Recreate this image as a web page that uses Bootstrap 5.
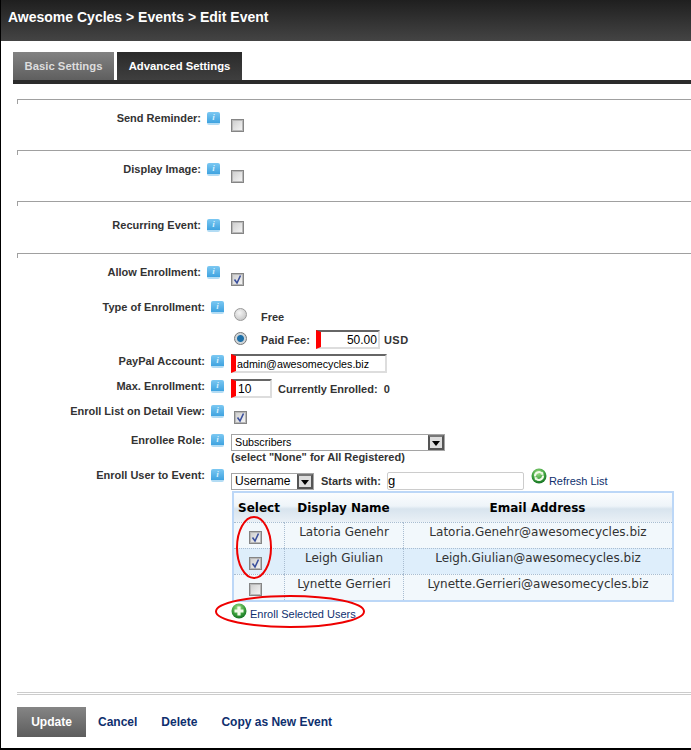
<!DOCTYPE html>
<html lang="en">
<head>
    <meta charset="UTF-8">
    <meta name="viewport" content="width=device-width, initial-scale=1.0">
    <title>Edit Event</title>
    <link href="https://cdn.jsdelivr.net/npm/bootstrap@5.3.0/dist/css/bootstrap.min.css" rel="stylesheet">
    <style>
        html, body { height: 750px; overflow: hidden; }
        body { background: #fff; color: #333; font-family: "Liberation Sans", Arial, sans-serif; font-size: 11px; line-height: 14px; }
        .page-frame { height: 750px; border-left: 1px solid #000; border-bottom: 2px solid #000; }
        .title-bar { height: 41px; padding: 9px 7px 0; background: linear-gradient(#1f1f1f, #444); color: #fff; font-size: 14px; font-weight: 700; line-height: 17px; }
        .tab-strip { margin: 11px 0 0 12px; height: 32px; border-bottom: 4px solid #2b2b2b; gap: 3px; }
        .tab-item { height: 28px; padding: 6px 0 0; font-size: 11.3px; font-weight: 700; line-height: 16px; color: #fff; text-decoration: none; text-align: center; white-space: nowrap; }
        .tab-off { width: 101px; background: linear-gradient(#828282, #5f5f5f); color: #ddd; }
        .tab-on { width: 125px; background: linear-gradient(#2a2a2a, #3f3f3f); }
        .form-area { margin-left: 16px; }
        .rule { border-top: 1px solid #a0a0a0; height: 5px; border-left: 1px solid #a0a0a0; }
        .rule-first { margin-top: 15px; }
        .form-row { display: flex; }
        .row-plain { height: 46px; padding-top: 7px; }
        .row-recur { height: 47px; padding-top: 12px; }
        .row-allow { height: 35px; padding-top: 7px; }
        .row-type { height: 61px; padding-top: 7px; }
        .row-input { height: 25px; }
        .row-list { height: 29px; }
        .row-role { height: 35px; }
        .row-enroll { height: 150px; }
        .field-label { width: 184px; flex: none; text-align: right; font-weight: 700; color: #333; }
        .help-tip { width: 13px; height: 13px; margin: 1px 0 0 6px; flex: none; border-radius: 2px; background: linear-gradient(#7cc8f2, #3fa3e0); border-bottom: 2px solid #b3dcf4; color: #d8f0fc; font: italic 700 9px/11px "Liberation Serif", serif; text-align: center; }
        .field-body { margin-left: 11px; flex: 1; min-width: 0; }
        /* from Type of Enrollment down the label column is 4px wider, the fields stay put */
        .row-wide .field-label { width: 188px; }
        .row-wide .field-body { margin-left: 7px; }
        .pad-check { padding-top: 8px; }
        .pad-recur { padding-top: 3px; }
        .pad-allow { padding-top: 8px; }
        .pad-list { padding-top: 7px; }
        .pad-type { padding-top: 9px; }
        .pad-role { padding-top: 1px; }
        .pad-enroll { margin-top: 4px; }
        .fake-check { display: inline-block; width: 13px; height: 13px; border: 1px solid #858585; box-shadow: inset 0 0 0 1px #b8b8b8; background: linear-gradient(135deg, #ccc, #f7f7f7); vertical-align: top; }
        .fake-check svg { display: block; width: 11px; height: 11px; }
        .shift-list { margin-left: 3px; }
        .fake-radio { display: inline-block; width: 13px; height: 13px; margin-left: 3px; border-radius: 50%; border: 1px solid #999; background: radial-gradient(circle at 40% 35%, #f5f5f5, #bbb); flex: none; }
        .fake-radio.radio-on { background: radial-gradient(circle, #1d6fa8 0 3px, #cfd6da 4px); border-color: #777; }
        .radio-free { height: 21px; }
        .radio-free .fake-radio { margin-top: -1px; }
        .radio-paid { height: 19px; }
        .radio-paid .fake-radio { margin-top: -2px; }
        .radio-text { margin-left: 14px; font-weight: 700; }
        .radio-free .radio-text { padding-top: 1px; }
        .radio-paid .radio-text { padding-right: 6px; }
        .usd-text { margin-left: 4px; font-weight: 700; letter-spacing: .5px; }
        .text-in { height: 19px; border: 2px solid #ddd; border-top-color: #666; border-left: 5px solid #f00; background: #fff; color: #000; font-size: 11px; line-height: 15px; padding: 1px 0 0 1px; white-space: nowrap; }
        .w-fee { width: 64px; text-align: right; padding-right: 1px; font-size: 12px; }
        .w-mail { width: 156px; font-size: 10.7px; }
        .w-max { width: 41px; padding-left: 2px; font-size: 12px; }
        .enrolled-text { margin-left: 6px; padding-top: 3px; font-weight: 700; }
        .drop-box { height: 17px; border: 1px solid #a5a5a5; background: #fff; color: #000; line-height: 15px; padding-left: 3px; }
        .w-role { width: 214px; font-size: 10.7px; }
        .w-user { width: 83px; font-size: 12px; }
        .drop-arrow { width: 16px; height: 15px; border: 2px solid #555; border-top-color: #777; background: #ddd; position: relative; flex: none; }
        .drop-arrow::after { content: ""; position: absolute; left: 2px; top: 4px; border: 4px solid transparent; border-top: 5px solid #000; border-bottom: 0; }
        .role-note { font-weight: 700; margin-top: -1px; }
        .filter-row { height: 18px; margin-bottom: 1px; }
        .starts-text { margin-left: 7px; font-weight: 700; }
        .search-box { height: 18px; width: 137px; margin-left: 6px; border: 1px solid #ccc; border-radius: 2px; color: #000; font-size: 13px; line-height: 16px; padding-left: 0; }
        .link-blue { color: #0f2f6e; text-decoration: none; }
        .link-refresh { margin-left: 2px; }
        .users-wrap { position: relative; width: 442px; margin-left: 1px; }
        .users-grid { width: 442px; border: 2px solid #bcd7f7; border-collapse: separate; border-spacing: 0; font-family: "DejaVu Sans", Verdana, sans-serif; font-size: 12px; line-height: 14px; color: #333; }
        .users-grid th { height: 29px; background: linear-gradient(#fbfdfe 0, #eef4f9 45%, #d8e4ee 55%, #e9f0f6 100%); color: #000; font-size: 12px; text-align: center; vertical-align: middle; padding: 0; }
        .col-select { width: 50px; }
        .col-name { width: 119px; }
        .users-grid td { height: 26px; text-align: center; vertical-align: top; padding: 2px 0 0; border-top: 1px dotted #a9bdd1; border-left: 1px dotted #a9bdd1; background: #f2f8fc; }
        .users-grid td:first-child { border-left: 0; padding: 8px 8px 0 0; }
        .users-grid tr.alt-row td { background: #deeefb; }
        .oval-mark { position: absolute; pointer-events: none; overflow: visible; }
        .oval-select { left: 4px; top: 25px; }
        .oval-enroll { left: -17px; top: 104px; }
        .round-icon { width: 16px; height: 16px; flex: none; }
        .icon-refresh { margin: -10px 0 0 7px; }
        .icon-add { margin-left: -1px; }
        .enroll-line { margin-top: 1px; }
        .link-enroll { margin: 4px 0 0 3px; }
        .action-row { margin-top: 12px; gap: 24px; font-size: 12px; font-weight: 700; }
        .update-btn { width: 69px; height: 30px; margin-right: -12px; background: linear-gradient(#858585, #5d5d5d); color: #fff; text-align: center; line-height: 30px; text-decoration: none; }
        .double-rule { height: 3px; margin-top: 74px; border-top: 1px solid #ccc; border-bottom: 1px solid #ccc; }
    </style>
</head>
<body>
<svg width="0" height="0" class="position-absolute">
    <defs>
        <radialGradient id="greenGloss" cx="45%" cy="30%" r="75%">
            <stop offset="0" stop-color="#a6e08c"/>
            <stop offset=".55" stop-color="#3fa33f"/>
            <stop offset="1" stop-color="#0f6b1f"/>
        </radialGradient>
    </defs>
</svg>
<div class="page-frame">
    <div class="title-bar">Awesome Cycles &gt; Events &gt; Edit Event</div>
    <div class="tab-strip d-flex">
        <a class="tab-item tab-off" href="#">Basic Settings</a>
        <a class="tab-item tab-on" href="#">Advanced Settings</a>
    </div>
    <div class="form-area">
        <div class="rule rule-first"></div>
        <div class="form-row row-plain">
            <div class="field-label">Send Reminder:</div><div class="help-tip">i</div>
            <div class="field-body pad-check"><span class="fake-check"></span></div>
        </div>
        <div class="rule"></div>
        <div class="form-row row-plain">
            <div class="field-label">Display Image:</div><div class="help-tip">i</div>
            <div class="field-body pad-check"><span class="fake-check"></span></div>
        </div>
        <div class="rule"></div>
        <div class="form-row row-recur">
            <div class="field-label">Recurring Event:</div><div class="help-tip">i</div>
            <div class="field-body pad-recur"><span class="fake-check"></span></div>
        </div>
        <div class="rule"></div>
        <div class="form-row row-allow">
            <div class="field-label">Allow Enrollment:</div><div class="help-tip">i</div>
            <div class="field-body pad-allow"><span class="fake-check"><svg viewBox="0 0 11 11"><path d="M2.5 5.5 L5 9 L8.5 1.5" fill="none" stroke="#3a4f9c" stroke-width="1.6"/></svg></span></div>
        </div>
        <div class="form-row row-type row-wide">
            <div class="field-label">Type of Enrollment:</div><div class="help-tip">i</div>
            <div class="field-body pad-type">
                <div class="radio-free d-flex align-items-start"><span class="fake-radio"></span><span class="radio-text">Free</span></div>
                <div class="radio-paid d-flex align-items-center"><span class="fake-radio radio-on"></span><span class="radio-text">Paid Fee:</span><span class="text-in w-fee">50.00</span><span class="usd-text">USD</span></div>
            </div>
        </div>
        <div class="form-row row-input row-wide">
            <div class="field-label">PayPal Account:</div><div class="help-tip">i</div>
            <div class="field-body"><div class="text-in w-mail">admin@awesomecycles.biz</div></div>
        </div>
        <div class="form-row row-input row-wide">
            <div class="field-label">Max. Enrollment:</div><div class="help-tip">i</div>
            <div class="field-body d-flex"><div class="text-in w-max">10</div><span class="enrolled-text">Currently Enrolled:&nbsp; 0</span></div>
        </div>
        <div class="form-row row-list row-wide">
            <div class="field-label">Enroll List on Detail View:</div><div class="help-tip">i</div>
            <div class="field-body pad-list"><span class="fake-check shift-list"><svg viewBox="0 0 11 11"><path d="M2.5 5.5 L5 9 L8.5 1.5" fill="none" stroke="#3a4f9c" stroke-width="1.6"/></svg></span></div>
        </div>
        <div class="form-row row-role row-wide">
            <div class="field-label">Enrollee Role:</div><div class="help-tip">i</div>
            <div class="field-body pad-role">
                <div class="drop-box w-role d-flex justify-content-between">Subscribers<span class="drop-arrow"></span></div>
                <div class="role-note">(select "None" for All Registered)</div>
            </div>
        </div>
        <div class="form-row row-enroll row-wide">
            <div class="field-label">Enroll User to Event:</div><div class="help-tip">i</div>
            <div class="field-body pad-enroll">
                <div class="filter-row d-flex align-items-center">
                    <div class="drop-box w-user d-flex justify-content-between">Username<span class="drop-arrow"></span></div>
                    <span class="starts-text">Starts with:</span>
                    <div class="search-box">g</div>
                    <svg class="round-icon icon-refresh" viewBox="0 0 16 16"><circle cx="8" cy="8" r="7.5" fill="url(#greenGloss)"/><path d="M4 8.5a4 4 0 0 1 6.8-3.2M12 7.5a4 4 0 0 1-6.8 3.2" fill="none" stroke="#f2fbea" stroke-width="2"/><path d="M9.5 6.5 12.5 7 12 3.5zM6.5 9.5 3.5 9 4 12.5z" fill="#f2fbea"/></svg>
                    <a class="link-blue link-refresh" href="#">Refresh List</a>
                </div>
                <div class="users-wrap">
                    <table class="users-grid">
                        <thead><tr><th class="col-select">Select</th><th class="col-name">Display Name</th><th>Email Address</th></tr></thead>
                        <tbody>
                            <tr><td><span class="fake-check"><svg viewBox="0 0 11 11"><path d="M2.5 5.5 L5 9 L8.5 1.5" fill="none" stroke="#3a4f9c" stroke-width="1.6"/></svg></span></td><td>Latoria Genehr</td><td>Latoria.Genehr@awesomecycles.biz</td></tr>
                            <tr class="alt-row"><td><span class="fake-check"><svg viewBox="0 0 11 11"><path d="M2.5 5.5 L5 9 L8.5 1.5" fill="none" stroke="#3a4f9c" stroke-width="1.6"/></svg></span></td><td>Leigh Giulian</td><td>Leigh.Giulian@awesomecycles.biz</td></tr>
                            <tr><td><span class="fake-check"></span></td><td>Lynette Gerrieri</td><td>Lynette.Gerrieri@awesomecycles.biz</td></tr>
                        </tbody>
                    </table>
                    <svg class="oval-mark oval-select" width="36" height="63"><ellipse cx="18" cy="31.5" rx="17" ry="30.5" fill="none" stroke="#e00" stroke-width="2"/></svg>
                    <svg class="oval-mark oval-enroll" width="150" height="33"><ellipse cx="75" cy="16.5" rx="74" ry="15.5" fill="none" stroke="#e00" stroke-width="2"/></svg>
                    <div class="enroll-line d-flex align-items-start">
                        <svg class="round-icon icon-add" viewBox="0 0 16 16"><circle cx="8" cy="8" r="7.5" fill="url(#greenGloss)"/><path d="M8 3.5v9M3.5 8h9" stroke="#f2fbea" stroke-width="3.2"/></svg>
                        <a class="link-blue link-enroll" href="#">Enroll Selected Users</a>
                    </div>
                </div>
            </div>
        </div>
        <div class="double-rule"></div>
        <div class="action-row d-flex align-items-center">
            <a class="update-btn" href="#">Update</a>
            <a class="link-blue" href="#">Cancel</a>
            <a class="link-blue" href="#">Delete</a>
            <a class="link-blue" href="#">Copy as New Event</a>
        </div>
    </div>
</div>
<script src="https://cdn.jsdelivr.net/npm/bootstrap@5.3.0/dist/js/bootstrap.bundle.min.js"></script>
</body>
</html>
